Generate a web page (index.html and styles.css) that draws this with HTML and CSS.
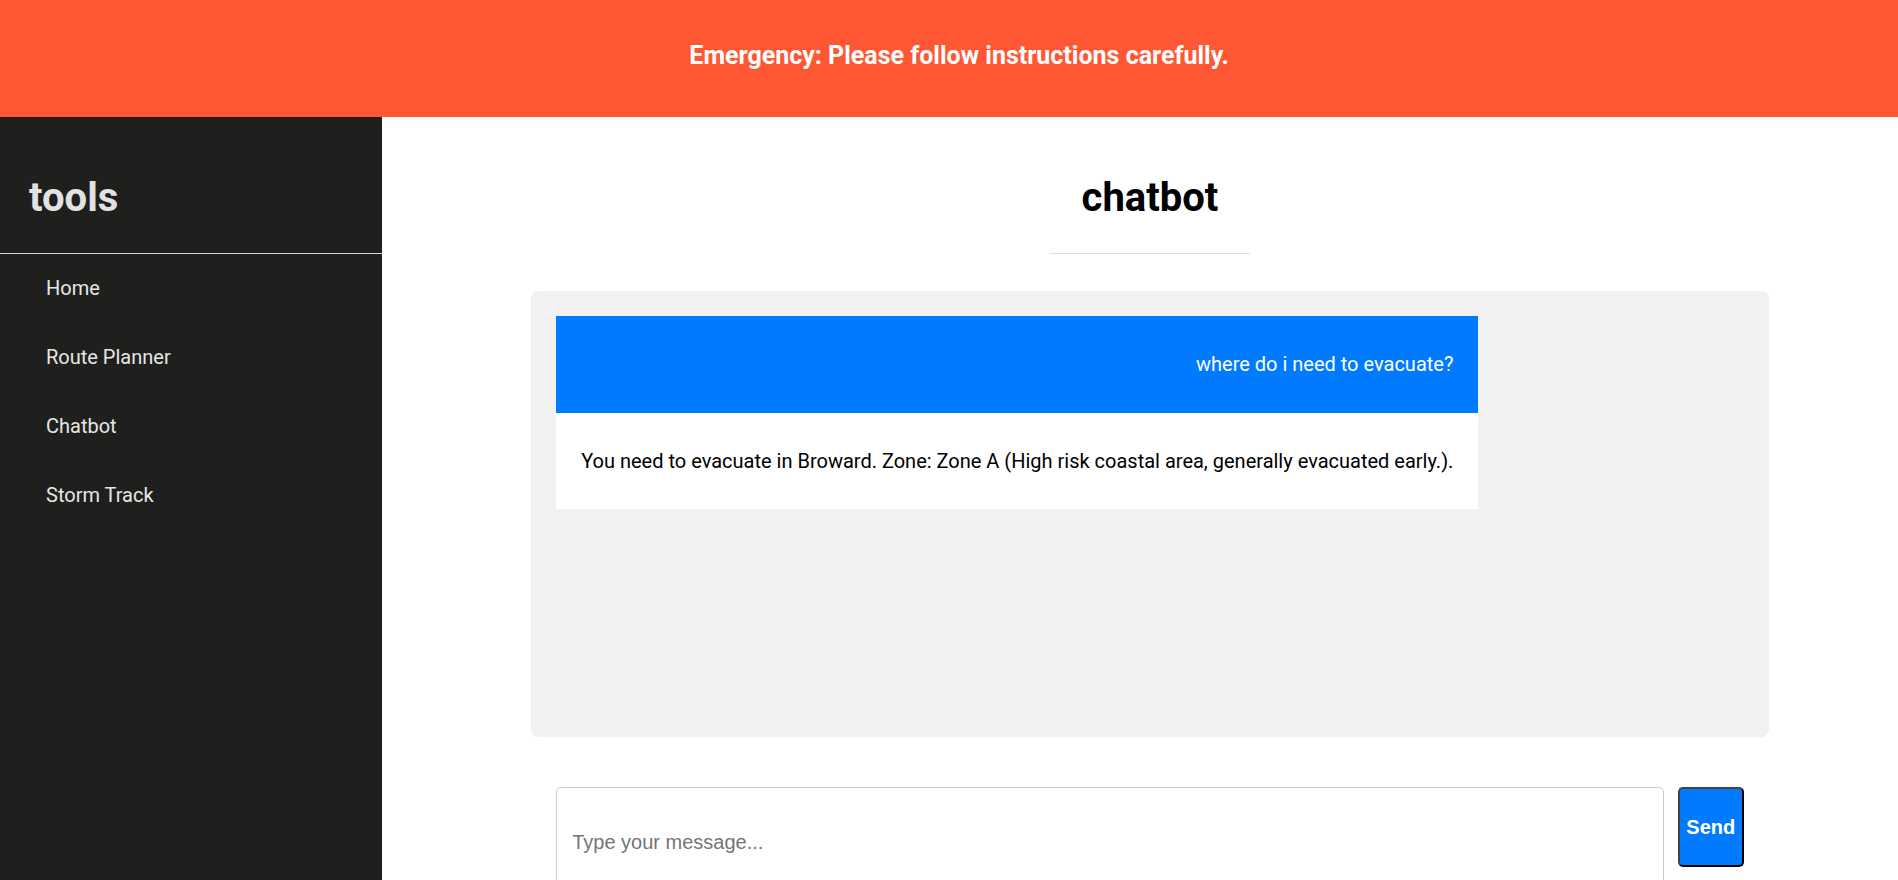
FILE: index.html
```html
<!DOCTYPE html>
<html lang="en">
<head>
<meta charset="utf-8">
<title>chatbot</title>
<link rel="stylesheet" href="styles.css">
</head>
<body>
<header class="banner">
  <p class="banner-text">Emergency: Please follow instructions carefully.</p>
</header>
<div class="layout">
  <aside class="sidebar">
    <div class="sidebar-head">
      <h2 class="brand">tools</h2>
    </div>
    <ul class="nav">
      <li class="nav-item">Home</li>
      <li class="nav-item">Route Planner</li>
      <li class="nav-item">Chatbot</li>
      <li class="nav-item">Storm Track</li>
    </ul>
  </aside>
  <main class="main">
    <div class="title-wrap">
      <h1 class="title">chatbot</h1>
      <div class="title-rule"></div>
    </div>
    <section class="chat-box">
      <div class="thread">
        <div class="msg msg-user">where do i need to evacuate?</div>
        <div class="msg msg-bot">You need to evacuate in Broward. Zone: Zone A (High risk coastal area, generally evacuated early.).</div>
      </div>
    </section>
    <form class="composer">
      <input class="composer-input" type="text" placeholder="Type your message...">
      <button class="composer-send" type="button">Send</button>
    </form>
  </main>
</div>
</body>
</html>
```

FILE: styles.css
```css
html, body {
  margin: 0;
  padding: 0;
  height: 100%;
  overflow: hidden;
}

body {
  font-family: Roboto, "Liberation Sans", Arial, sans-serif;
  background: #ffffff;
  color: #000000;
}

.banner {
  box-sizing: border-box;
  height: 117px;
  background: #ff5733;
  padding: 41px 0 0 20px;
  text-align: center;
}

.banner-text {
  margin: 0;
  color: #ffffff;
  font-size: 25px;
  font-weight: 700;
}

.layout {
  display: flex;
  height: calc(100% - 117px);
}

.sidebar {
  flex: 0 0 382px;
  background: #1f201e;
  color: #e0e0e0;
}

.sidebar-head {
  box-sizing: border-box;
  height: 137px;
  padding: 57px 0 0 29px;
  border-bottom: 1px solid #d9d9d9;
}

.brand {
  margin: 0;
  font-size: 40px;
  font-weight: 700;
  color: #e2e2e2;
}

.nav {
  list-style: none;
  margin: 0;
  padding: 0 0 0 46px;
}

.nav-item {
  padding: 22px 0 23.1px;
  font-size: 20px;
  color: #e6e6e6;
}

.main {
  flex: 1;
  padding: 0 20px 0 40px;
  min-width: 0;
}

.title-wrap {
  box-sizing: border-box;
  height: 137px;
  padding-top: 57px;
  display: flex;
  flex-direction: column;
  align-items: center;
}

.title {
  margin: 0;
  font-size: 40px;
  font-weight: 700;
  line-height: normal;
}

.title-rule {
  width: 200px;
  height: 1px;
  margin-top: auto;
  background: #dddddd;
}

.chat-box {
  box-sizing: border-box;
  width: 85%;
  height: 446px;
  margin: 37px auto 0;
  padding: 25px;
  background: #f1f1f1;
  border-radius: 8px;
}

.thread {
  display: inline-flex;
  flex-direction: column;
}

.msg {
  padding: 36.3px 25px;
  font-size: 20px;
}

.msg-user {
  background: #007bff;
  color: #ffffff;
  text-align: right;
}

.msg-bot {
  background: #ffffff;
  color: #000000;
}

.composer {
  box-sizing: border-box;
  width: 85%;
  margin: 50px auto 0;
  padding: 0 25px;
  display: flex;
  align-items: flex-start;
  gap: 14px;
}

.composer-input {
  flex: 1;
  min-width: 0;
  box-sizing: border-box;
  height: 111px;
  padding: 0 15px;
  border: 1px solid #cccccc;
  border-radius: 5px;
  font-family: "Liberation Sans", Arial, sans-serif;
  font-size: 20px;
  outline: none;
}

.composer-input::placeholder {
  color: #757575;
}

.composer-send {
  box-sizing: border-box;
  width: 66px;
  height: 80px;
  padding: 0;
  background: #007bff;
  color: #ffffff;
  border: 2px solid;
  border-color: #444444 #000000 #000000 #444444;
  border-radius: 5px;
  font-family: "Liberation Sans", Arial, sans-serif;
  font-size: 20px;
  font-weight: 700;
}
```
